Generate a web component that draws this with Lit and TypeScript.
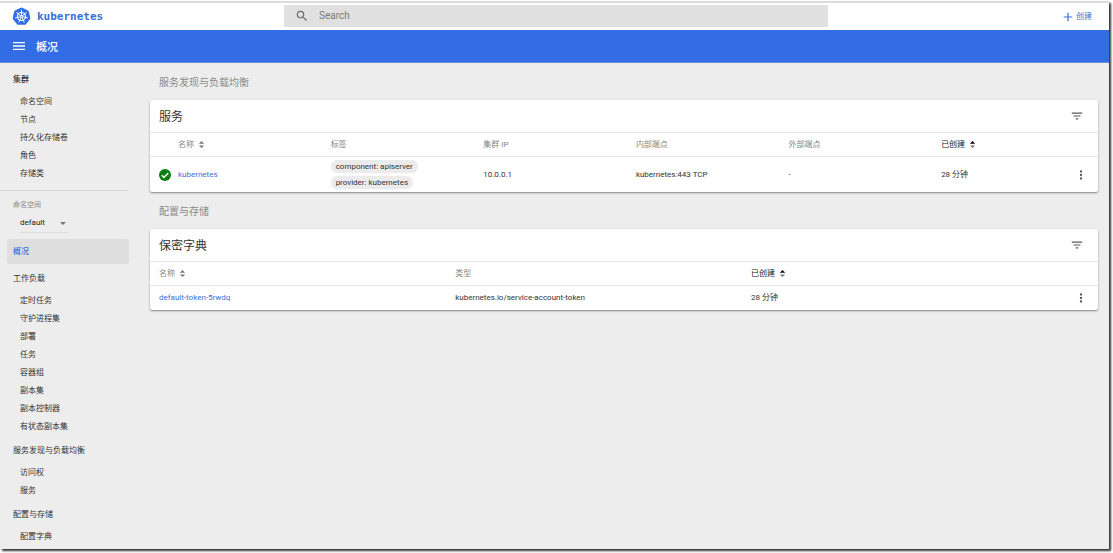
import { LitElement, html, css, svg } from "lit";
import { customElement, state } from "lit/decorators.js";
import { classMap } from "lit/directives/class-map.js";

interface NavGroup {
  title: string;
  items: string[];
}

const CLUSTER: NavGroup = {
  title: "集群",
  items: ["命名空间", "节点", "持久化存储卷", "角色", "存储类"],
};

const GROUPS: NavGroup[] = [
  {
    title: "工作负载",
    items: ["定时任务", "守护进程集", "部署", "任务", "容器组", "副本集", "副本控制器", "有状态副本集"],
  },
  { title: "服务发现与负载均衡", items: ["访问权", "服务"] },
  { title: "配置与存储", items: ["配置字典"] },
];

const SPOKES = [0, 1, 2, 3, 4, 5, 6].map((i) => (i * 360) / 7);

const logo = html`<svg class="logo" viewBox="0 0 36 36" aria-hidden="true">
  <path
    fill="#326ce5"
    d="M16.7 1.3a3 3 0 0 1 2.6 0l11 5.3a3 3 0 0 1 1.6 2l2.7 11.9a3 3 0 0 1-.6 2.5l-7.6 9.6a3 3 0 0 1-2.3 1.1H11.900a3 3 0 0 1-2.300-1.100L2 23a3 3 0 0 1-.6-2.500L4.100 8.600a3 3 0 0 1 1.600-2z"
  />
  <circle cx="18" cy="18" r="7.600" fill="none" stroke="#fff" stroke-width="2.200" />
  ${SPOKES.map(
    (a) => svg`<path transform="rotate(${a} 18 18)" d="M18 16V6.200" stroke="#fff" stroke-width="1.700" stroke-linecap="round" />`,
  )}
  <circle cx="18" cy="18" r="2.600" fill="#fff" />
  <circle cx="18" cy="18" r="1" fill="#326ce5" />
</svg>`;

const searchIcon = html`<svg class="icon-md" viewBox="0 0 24 24" aria-hidden="true">
  <path
    d="M15.500 14h-.79l-.28-.27A6.471 6.471 0 0 0 16 9.500 6.500 6.500 0 1 0 9.500 16c1.610 0 3.090-.59 4.230-1.570l.27.28v.79l5 4.990L20.490 19l-4.990-5zm-6 0C7.010 14 5 11.990 5 9.500S7.010 5 9.500 5 14 7.010 14 9.500 11.990 14 9.500 14z"
  />
</svg>`;

const menuIcon = html`<svg class="icon-lg" viewBox="0 0 24 24" aria-hidden="true">
  <path d="M3 18h18v-2H3v2zm0-5h18v-2H3v2zm0-7v2h18V6H3z" />
</svg>`;

const plusIcon = html`<svg class="icon-sm" viewBox="0 0 24 24" aria-hidden="true">
  <path d="M20.500 13.200h-7.300v7.300h-2.400v-7.300H3.500v-2.400h7.300V3.500h2.400v7.300h7.300z" />
</svg>`;

const filterIcon = html`<svg class="icon-md" viewBox="0 0 24 24" aria-hidden="true">
  <path d="M10 18h4v-2h-4v2zM3 6v2h18V6H3zm3 7h12v-2H6v2z" />
</svg>`;

const moreIcon = html`<svg class="icon-md" viewBox="0 0 24 24" aria-hidden="true">
  <path
    d="M12 8a2 2 0 1 0 0-4 2 2 0 0 0 0 4zm0 2a2 2 0 1 0 0 4 2 2 0 0 0 0-4zm0 6a2 2 0 1 0 0 4 2 2 0 0 0 0-4z"
  />
</svg>`;

const okIcon = html`<svg class="status" viewBox="0 0 24 24" role="img" aria-label="正常">
  <circle cx="12" cy="12" r="12" fill="#0a7d0f" />
  <path d="M5.500 12.500l4.300 4.300 8.700-8.900" fill="none" stroke="#fff" stroke-width="3" />
</svg>`;

const sortIcon = (up: boolean) => html`<svg
  class=${classMap({ sort: true, active: up })}
  viewBox="0 0 8 10"
  aria-hidden="true"
>
  <path class="up" d="M1 4l3-3 3 3z" />
  <path class="down" d="M1 6l3 3 3-3z" />
</svg>`;

@customElement("app-root")
export class AppRoot extends LitElement {
  static styles = css`
    :host {
      display: flex;
      box-sizing: border-box;
      min-height: 100vh;
      padding: 1px 4px 4px 0;
      background: #fff;
      color: #333;
      font: 8px/12px Roboto, "Noto Sans CJK SC", sans-serif;
    }
    * {
      box-sizing: border-box;
    }
    button,
    input,
    select {
      font: inherit;
      color: inherit;
      border: 0;
      background: none;
      padding: 0;
      margin: 0;
    }
    button {
      display: inline-flex;
      align-items: center;
      cursor: pointer;
    }
    a {
      color: inherit;
      text-decoration: none;
    }
    svg {
      display: block;
      flex: none;
      fill: currentColor;
    }
    .window {
      flex: 1;
      min-width: 0;
      display: flex;
      flex-direction: column;
      background: #ededed;
      border-top: 2px solid #dcdcdc;
      box-shadow: 2px 2px 2px 0 #333;
    }
    .icon-sm {
      width: 12px;
      height: 12px;
    }
    .icon-md {
      width: 14px;
      height: 14px;
    }
    .icon-lg {
      width: 16px;
      height: 16px;
    }

    .top {
      display: grid;
      grid-template-columns: 34fr 68fr 33fr;
      align-items: center;
      height: 27px;
      padding: 0 17px 0 12px;
      background: #fff;
    }
    .brand {
      display: flex;
      align-items: center;
      gap: 6px;
      color: #3a6fd8;
      font: bold 11px/18px "DejaVu Sans Mono", monospace;
    }
    .logo {
      width: 19px;
      height: 19px;
    }
    .search {
      display: flex;
      align-items: center;
      align-self: start;
      gap: 10px;
      height: 22px;
      margin-top: 2px;
      padding: 0 11px;
      background: #e0e0e0;
      color: #6b6b6b;
    }
    .search input {
      flex: 1;
      min-width: 0;
      font-size: 10px;
      outline: 0;
    }
    .search input::placeholder {
      color: #7a7a7a;
      opacity: 1;
    }
    .create {
      justify-self: end;
      gap: 2px;
      color: #3a6fd8;
    }

    .bar {
      display: flex;
      align-items: center;
      gap: 9px;
      height: 33px;
      padding: 0 11px;
      background: #326de6;
      color: #fff;
      border-bottom: 1px solid #6b8fd9;
    }
    .bar h1 {
      margin: 0;
      padding-top: 3px;
      font-size: 11px;
      line-height: 16px;
      font-weight: 500;
    }

    .body {
      flex: 1;
      display: flex;
    }
    .side {
      flex: none;
      width: 129px;
      padding-top: 2px;
    }
    .side a {
      display: block;
    }
    .group {
      padding: 9px 0 7px 13px;
    }
    .item {
      padding: 3px 0 3px 20px;
    }
    .cluster {
      padding-bottom: 7px;
      border-bottom: 1px solid #d6d6d6;
    }
    .cluster .group {
      font-weight: 500;
    }
    .ns {
      display: flex;
      flex-direction: column;
      align-items: flex-start;
      gap: 3px;
      padding: 8px 0 6px 13px;
      color: #868686;
    }
    .ns label {
      font-size: 7px;
    }
    .picker {
      display: flex;
      align-items: center;
      margin-left: 7px;
      width: 48px;
      border-bottom: 1px solid #dcdcdc;
      color: #222;
      font-size: 8px;
    }
    .picker select {
      flex: 1;
      min-width: 0;
      height: 18px;
      appearance: none;
      outline: 0;
    }
    .caret {
      width: 6px;
      height: 3px;
      margin-right: 2px;
      color: #777;
    }
    .side .current {
      margin-left: 7px;
      padding: 7px 6px 6px;
      border-radius: 2px;
      background: #dedede;
      color: #3a6fd8;
      font-weight: 500;
    }

    main {
      flex: 1;
      min-width: 0;
      padding: 0 11px 0 21px;
    }
    h2 {
      margin: 0;
      padding: 12px 9px 9px;
      color: #8a8a8a;
      font-size: 10px;
      line-height: 16px;
      font-weight: 400;
    }
    .card {
      background: #fff;
      border-radius: 2px;
      box-shadow: 0 1px 2px rgba(0, 0, 0, 0.45);
    }
    .card header {
      display: flex;
      align-items: center;
      justify-content: space-between;
      height: 32px;
      padding: 0 14px 0 9px;
      color: #5a5a5a;
    }
    .card h3 {
      margin: 0;
      padding-top: 2px;
      color: #333;
      font-size: 12px;
      line-height: 18px;
      font-weight: 400;
    }
    table {
      width: 100%;
      table-layout: fixed;
      border-collapse: collapse;
    }
    th,
    td {
      padding: 0;
      text-align: left;
      font-weight: 400;
      vertical-align: middle;
      border-top: 1px solid #e6e6e6;
    }
    th,
    td {
      height: 24px;
    }
    th {
      color: #868686;
    }
    th.sorted {
      color: #222;
    }
    td a {
      color: #3a6fd8;
    }
    .c-icon {
      width: 28px;
    }
    .c-six {
      width: 16.1%;
    }
    .c-first {
      width: 32.2%;
    }
    .c-third {
      width: 31.2%;
    }
    .c-menu {
      width: 24px;
    }
    .pad {
      padding-left: 9px;
    }
    .status {
      width: 12px;
      height: 12px;
    }
    .sorter {
      gap: 4px;
    }
    .sort {
      width: 7px;
      height: 9px;
      color: #777;
    }
    .sort.active .up {
      fill: #000;
    }
    .more {
      display: flex;
      color: #555;
    }
    .chips {
      display: flex;
      flex-direction: column;
      align-items: flex-start;
      gap: 3px;
      padding: 3px 0;
    }
    .chip {
      padding: 0 5px;
      border-radius: 6px;
      background: #ebebeb;
      line-height: 13px;
    }
  `;

  @state() private page = "概况";

  private group(g: NavGroup) {
    return html`<a class="group" href="#">${g.title}</a>
      ${g.items.map((i) => html`<a class="item" href="#">${i}</a>`)}`;
  }

  private sorter(label: string, up = false) {
    return html`<button class="sorter">${label}${sortIcon(up)}</button>`;
  }

  private cardHead(title: string) {
    return html`<header>
      <h3>${title}</h3>
      <button aria-label="筛选">${filterIcon}</button>
    </header>`;
  }

  private more() {
    return html`<button class="more" aria-label="操作">${moreIcon}</button>`;
  }

  render() {
    return html`<div class="window">
      <div class="top">
        <a class="brand" href="#">${logo}<span>kubernetes</span></a>
        <label class="search">
          ${searchIcon}
          <input type="text" placeholder="Search" aria-label="Search" />
        </label>
        <button class="create">${plusIcon}创建</button>
      </div>
      <div class="bar">
        <button aria-label="菜单">${menuIcon}</button>
        <h1>${this.page}</h1>
      </div>
      <div class="body">
        <nav class="side">
          <div class="cluster">${this.group(CLUSTER)}</div>
          <div class="ns">
            <label for="ns">命名空间</label>
            <div class="picker">
              <select id="ns">
                <option>default</option>
              </select>
              <svg class="caret" viewBox="0 0 6 3" aria-hidden="true"><path d="M0 0h6L3 3z" /></svg>
            </div>
          </div>
          <a class="current" href="#" aria-current="page">概况</a>
          ${GROUPS.map((g) => this.group(g))}
        </nav>
        <main>
          <h2>服务发现与负载均衡</h2>
          <section class="card">
            ${this.cardHead("服务")}
            <table>
              <thead>
                <tr>
                  <th class="c-icon"></th>
                  <th class="c-six">${this.sorter("名称")}</th>
                  <th class="c-six">标签</th>
                  <th class="c-six">集群 IP</th>
                  <th class="c-six">内部端点</th>
                  <th class="c-six">外部端点</th>
                  <th class="sorted">${this.sorter("已创建", true)}</th>
                  <th class="c-menu"></th>
                </tr>
              </thead>
              <tbody>
                <tr>
                  <td class="pad">${okIcon}</td>
                  <td><a href="#">kubernetes</a></td>
                  <td>
                    <div class="chips">
                      <span class="chip">component: apiserver</span>
                      <span class="chip">provider: kubernetes</span>
                    </div>
                  </td>
                  <td>10.0.0.1</td>
                  <td>kubernetes:443 TCP</td>
                  <td>-</td>
                  <td>28 分钟</td>
                  <td>${this.more()}</td>
                </tr>
              </tbody>
            </table>
          </section>
          <h2>配置与存储</h2>
          <section class="card">
            ${this.cardHead("保密字典")}
            <table>
              <thead>
                <tr>
                  <th class="c-first pad">${this.sorter("名称")}</th>
                  <th class="c-third">类型</th>
                  <th class="sorted">${this.sorter("已创建", true)}</th>
                  <th class="c-menu"></th>
                </tr>
              </thead>
              <tbody>
                <tr>
                  <td class="pad"><a href="#">default-token-5rwdq</a></td>
                  <td>kubernetes.io/service-account-token</td>
                  <td>28 分钟</td>
                  <td>${this.more()}</td>
                </tr>
              </tbody>
            </table>
          </section>
        </main>
      </div>
    </div>`;
  }
}
